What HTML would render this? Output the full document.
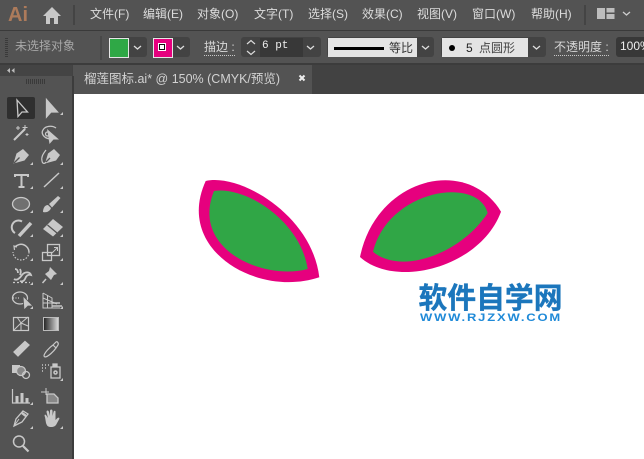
<!DOCTYPE html>
<html lang="zh">
<head>
<meta charset="utf-8">
<style>
html,body{margin:0;padding:0;background:#535353}
#app{position:relative;width:644px;height:459px;overflow:hidden;background:#535353;font-family:"Liberation Sans","Noto Sans CJK SC",sans-serif;font-size:12px;color:#d6d6d6}
#app div{position:absolute;white-space:nowrap}
.m{top:5px;line-height:18px;font-size:12px;color:#dcdcdc}
.dd{background:#434343;border-radius:3px;height:20px;top:37px}
svg{position:absolute;left:0;top:0}
</style>
</head>
<body>
<div id="app">
<div style="left:0;top:30px;width:644px;height:1px;background:#3a3a3a"></div>
<div style="left:0;top:64px;width:644px;height:30px;background:#424242"></div>
<div style="left:0;top:63px;width:644px;height:2px;background:#3c3c3c"></div>
<div style="left:73px;top:65px;width:239px;height:29px;background:#535353"></div>
<div style="left:0;top:65px;width:72px;height:11px;background:#444"></div>
<div style="left:0;top:76px;width:72px;height:383px;background:#535353"></div>
<div style="left:72px;top:76px;width:2px;height:383px;background:#3c3c3c"></div>
<div style="left:74px;top:94px;width:570px;height:365px;background:#fff"></div>

<div style="left:8px;top:2px;font-size:20px;line-height:26px;font-weight:bold;color:#ad7b5b">Ai</div>
<div class="m" style="left:90px">文件(F)</div>
<div class="m" style="left:143px">编辑(E)</div>
<div class="m" style="left:197px">对象(O)</div>
<div class="m" style="left:254px">文字(T)</div>
<div class="m" style="left:308px">选择(S)</div>
<div class="m" style="left:362px">效果(C)</div>
<div class="m" style="left:417px">视图(V)</div>
<div class="m" style="left:472px">窗口(W)</div>
<div class="m" style="left:531px">帮助(H)</div>

<div style="left:15px;top:37px;line-height:18px;color:#a8a8a8">未选择对象</div>
<div class="dd" style="left:109px;width:38px"></div>
<div style="left:109px;top:38px;width:18px;height:18px;background:#2fa846;border:1px solid #e6e6e6"></div>
<div class="dd" style="left:153px;width:37px"></div>
<div style="left:153px;top:38px;width:18px;height:18px;background:#e6007e;border:1px solid #e6e6e6"></div>
<div style="left:158px;top:43px;width:6px;height:6px;border:1px solid #fff;background:#111"></div>
<div style="left:160px;top:45px;width:4px;height:4px;background:#fff"></div>
<div style="left:204px;top:38px;line-height:18px;color:#d8d8d8;border-bottom:1px dotted #c8c8c8;height:17px">描边 :</div>
<div class="dd" style="left:241px;width:80px"></div>
<div style="left:260px;top:38px;width:43px;height:19px;background:#383838"></div>
<div style="left:262px;top:38px;font:11px/17px 'Liberation Mono',monospace;color:#eee">6 pt</div>

<div class="dd" style="left:327px;width:107px"></div>
<div style="left:328px;top:38px;width:89px;height:19px;background:#e4e4e4"></div>
<div style="left:334px;top:47px;width:50px;height:3px;background:#000"></div>
<div style="left:389px;top:39px;line-height:18px;color:#333">等比</div>
<div class="dd" style="left:441px;width:105px"></div>
<div style="left:442px;top:38px;width:86px;height:19px;background:#e4e4e4"></div>
<div style="left:449px;top:45px;width:6px;height:6px;border-radius:50%;background:#000"></div>
<div style="left:466px;top:39px;line-height:18px;color:#222">5</div>
<div style="left:479px;top:39px;line-height:18px;color:#444">点圆形</div>
<div style="left:554px;top:38px;line-height:18px;color:#d8d8d8;border-bottom:1px dotted #c8c8c8;height:17px">不透明度 :</div>
<div style="left:616px;top:37px;width:28px;height:20px;background:#383838;border-radius:3px 0 0 3px"></div>
<div style="left:620px;top:37px;line-height:18px;color:#eee">100%</div>

<div style="left:84px;top:70px;line-height:18px;font-size:12.5px;color:#d2d2d2">榴莲图标.ai* @ 150% (CMYK/预览)</div>

<div style="left:418.500px;top:279px;font-size:28.8px;line-height:36px;font-weight:bold;color:#1b76bc;-webkit-text-stroke:.4px #1b76bc;font-family:'Noto Sans CJK SC',sans-serif">软件自学网</div>
<div style="left:420px;top:309.500px;font-size:11px;line-height:16px;font-weight:bold;letter-spacing:1.55px;color:#1f8ad8;transform:scaleX(1.18);transform-origin:left center">WWW.RJZXW.COM</div>

<svg width="644" height="459" viewBox="0 0 644 459" fill="none">
<!-- leaves -->
<path d="M205.700 181C240 173 312 215 319.300 277.300C258 298 174 250 205.700 181Z" fill="#e6007e"/>
<path d="M214 191C245 186 300 220 307.700 269C265 281 190 250 214 191Z" fill="#30a646"/>
<path d="M360 257C376 178 467 155 501 211.700C480 268 395 289 360 257Z" fill="#e6007e"/>
<path d="M373 251.700C388 190 477 175 487.700 213C460 255 400 275 373 251.700Z" fill="#30a646"/>

<!-- top icons -->
<path d="M43 16L52 7L61 16H58V24H54V18H50V24H46V16Z" fill="#c8c8c8"/>
<path d="M74 5V25" stroke="#444" stroke-width="2"/>
<path d="M585 5V25" stroke="#444" stroke-width="2"/>
<path d="M597 8h8v11h-8zM606.500 8h8v4.500h-8zM606.500 14h8v5h-8z" fill="#bdbdbd"/>
<path d="M623 12l3.500 3 3.500-3" stroke="#ccc" stroke-width="1.300"/>

<!-- control bar details -->
<path d="M5 38.500h3M5 40.500h3M5 42.500h3M5 44.500h3M5 46.500h3M5 48.500h3M5 50.500h3M5 52.500h3M5 54.500h3M5 56.500h3" stroke="#3a3a3a"/>
<path d="M101 36V60" stroke="#444" stroke-width="1.500"/>
<path d="M134 46l3.500 3 3.500-3M177 46l3.500 3 3.500-3M307 46l3.500 3 3.500-3M422 46l3.500 3 3.500-3M533 46l3.500 3 3.500-3" stroke="#ddd" stroke-width="1.300"/>
<path d="M247 44l4-3.500 4 3.500M247 51l4 3.500 4-3.500" stroke="#ddd" stroke-width="1.200"/>

<!-- tab -->
<path d="M299.500 75.500l5 5M304.500 75.500l-5 5" stroke="#eee" stroke-width="2"/>
<path d="M12.500 68l-3 2.500 3 2.500zM8 68l-3 2.500 3 2.500z" transform="translate(2 0)" fill="#bbb"/>
<path d="M26.500 79v5M28.500 79v5M30.500 79v5M32.500 79v5M34.500 79v5M36.500 79v5M38.500 79v5M40.500 79v5M42.500 79v5M44.500 79v5" stroke="#3a3a3a"/>

<!-- selected tool -->
<rect x="7" y="97" width="28" height="22" rx="2" fill="#2f2f2f"/>

<g stroke="#c8c8c8" stroke-width="1.300" fill="none">
<!-- row 1 -->
<path d="M17 100L27.500 112L22 112L18 116.500Z"/>
<path d="M46.500 99.500L57.500 112L51 112L46.500 117Z" fill="#c8c8c8"/>
<!-- row 2 -->
<path d="M14 140L25 129" stroke-width="2"/>
<path d="M25 125v5M22.500 127.500h5M18 126v4M16 128h4M27 133v3M25.500 134.500h3" stroke-width="1"/>
<path d="M50 139c-7-1-9-6-7-9c2-4 9-5 13-2"/>
<path d="M47 129L59 139.500H53.500L49.500 144Z" fill="#c8c8c8" stroke="none"/>
<circle cx="47.500" cy="134" r="2"/>
<!-- row 3 -->
<path d="M13.500 163.500L16.500 153.500L23 149L29 155L24.500 160.500Z" fill="#c8c8c8" stroke="none"/>
<path d="M14 163L19.500 157.500" stroke="#535353"/>
<path d="M45 163.500L48 153.500L54 149L60 155L56 160.500Z" fill="#c8c8c8" stroke="none"/>
<path d="M45 163L50 158" stroke="#535353"/>
<path d="M46 150c-3 4-5 7-4 11c.5 3 3 3 4 1" stroke-width="1.200"/>
<!-- row 4 -->
<path d="M15 177V175H28V177M21.500 175V187M18.500 187H24.500" stroke-width="2"/>
<path d="M44 187L59 173" stroke-width="1.500"/>
<!-- row 5 -->
<ellipse cx="21" cy="204" rx="8.500" ry="6.500" fill="#707070"/>
<path d="M43 212c0-4 2-7 5-7l3 3c-1 3-4 5-8 4Z" fill="#c8c8c8" stroke="none"/>
<path d="M49 204L58 196L60.500 198L52 207.500Z" fill="#c8c8c8" stroke="none"/>
<!-- row 6 -->
<path d="M22 221.500A6.500 6.500 0 1 0 15 233" stroke-width="2"/>
<path d="M19 236L31 223" stroke-width="3.500"/>
<path d="M43 229L53 219L63 227L53 236.500Z" fill="#c8c8c8" stroke="none"/>
<path d="M47.500 225L57 233" stroke="#535353"/>
<!-- row 7 -->
<path d="M17 247L14 246L14.500 250" stroke-width="1.200"/>
<path d="M15 247A8 8 0 0 1 29 252" stroke-width="1.500"/>
<path d="M29 252A8 8 0 0 1 13 252" stroke-width="1.200" stroke-dasharray="1.500 1.500"/>
<rect x="42.500" y="252.500" width="9" height="8"/>
<rect x="47.500" y="244.500" width="12" height="11"/>
<path d="M52 253L57 248M54 247.500h3.500V251" stroke-width="1"/>
<!-- row 8 -->
<path d="M14 279c3 2 6-1 8-4c3-4 8-3 9 0c-3-1-5 1-6 4c-1 2-3 3-5 2M15 269c2 0 3 2 3 4M20 269c1 2 1 4 0 6" stroke-width="1.800"/>
<path d="M13 282.500L30 282.500" stroke-width="1.200" stroke-dasharray="2 2"/>
<path d="M50 267L57 274L54 275L51 280L45 274L49 271Z" fill="#c8c8c8" stroke="none"/>
<path d="M46 279L42.500 283" stroke-width="1.500"/>
<!-- row 9 -->
<ellipse cx="20" cy="298" rx="7.500" ry="6"/>
<path d="M13 298h7" stroke-dasharray="1 1.500"/>
<path d="M23 296L33 306H28L24 310Z" fill="#c8c8c8" stroke="#535353" stroke-width=".8"/>
<path d="M43 293V308H60M43 293L52 298V308M43 298L57 304M43 303H52M47.500 295.500V308" stroke-width="1"/>
<path d="M52 303H60M52 306H62" stroke-width="1.500"/>
<!-- row 10 -->
<rect x="13.500" y="317.500" width="15" height="13" stroke-width="1.200"/>
<path d="M14 330L21 323L28 317M21 323L17 317M21 323L28 326M21 323L21 330" stroke-width="1"/>
</g>
<defs>
<linearGradient id="g" x1="0" x2="1" y1="0" y2="0"><stop offset="0" stop-color="#222"/><stop offset="1" stop-color="#ddd"/></linearGradient>
</defs>
<rect x="43.500" y="317.500" width="15" height="13" fill="url(#g)" stroke="#bbb"/>
<g stroke="#c8c8c8" stroke-width="1.300" fill="none">
<!-- row 11 -->
<path d="M14.500 352L25 342L28.500 345L18 355.500Z" fill="#c8c8c8" stroke-width="2"/>
<path d="M44 356c0-3 6-9 9-11l3 3c-2 3-8 9-11 9ZM53 345l3-3c1-1 3 1 2 3l-2 3" stroke-width="1.200"/>
<!-- row 12 -->
<rect x="12" y="365" width="8" height="8" fill="#c8c8c8" stroke="none"/>
<circle cx="21" cy="371" r="4.500" fill="#888"/>
<circle cx="26" cy="375" r="3.500"/>
<path d="M42 365h1M45 365h1M48 365h1M42 368h1M45 368h1M42 371h1" stroke-width="1.500"/>
<rect x="51" y="367" width="9" height="11"/>
<path d="M53 367v-3h4v3" fill="#c8c8c8"/>
<circle cx="55.500" cy="372.500" r="1.500" stroke-width="1.500"/>
<!-- row 13 -->
<path d="M12.500 389V403H30" stroke-width="1.200"/>
<path d="M17 396V403M22 393V403M27 398V403" stroke-width="3"/>
<path d="M41 392H49M46 388V395" stroke-width="1"/>
<path d="M47 394H54L58 398V403H47Z" fill="#888"/>
<!-- row 14 -->
<path d="M14 426L16 419L23 411L28 414L22 422Z"/>
<path d="M14 426L19 419" stroke-width="1"/>
<path d="M22 413L26 416" stroke-width="2.500"/>
<path d="M45 417c-1-2 0-3 1-2l2 3L46.500 412c0-2 2-2 2.500 0L50 416V411c0-2 2.500-2 2.500 0V416l1-4c.5-2 2.500-1.500 2 .5V420l2-2c1.500-1 2.500 0 1.500 1.500L56 425c-1 1-2 2-5 2c-3 0-4-1-5-4Z" fill="#c8c8c8" stroke="none"/>
<!-- row 15 -->
<circle cx="19" cy="441.500" r="5.500" stroke-width="1.500"/>
<path d="M23 446L28.500 451.500" stroke-width="2.200"/>
</g>
<!-- corner markers -->
<path d="M63 115v-3l-3 3zM33 165v-3l-3 3zM63 165v-3l-3 3zM33 189v-3l-3 3zM63 189v-3l-3 3zM33 213v-3l-3 3zM63 213v-3l-3 3zM33 237v-3l-3 3zM63 237v-3l-3 3zM33 261v-3l-3 3zM63 261v-3l-3 3zM33 285v-3l-3 3zM63 285v-3l-3 3zM33 309v-3l-3 3zM63 309v-3l-3 3zM63 381v-3l-3 3zM33 405v-3l-3 3zM33 429v-3l-3 3zM63 429v-3l-3 3z" fill="#c8c8c8"/>
</svg>
</div>
</body>
</html>
